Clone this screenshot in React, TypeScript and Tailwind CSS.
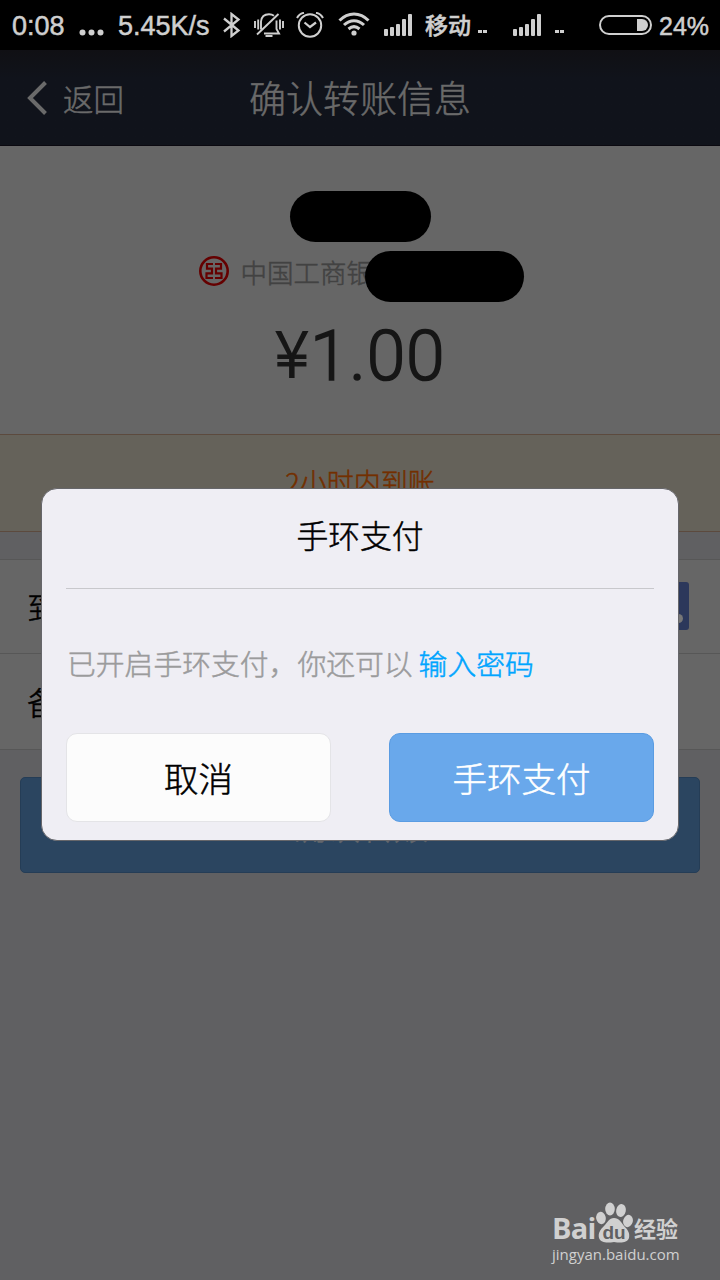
import type { ReactNode } from "react";

const SIGNAL_BARS = [
  { x: 0, y: 15, h: 7 },
  { x: 6, y: 13, h: 9 },
  { x: 12, y: 10, h: 12 },
  { x: 18, y: 5, h: 17 },
  { x: 24, y: 0, h: 22 },
];

function SignalIcon({ className }: { className: string }) {
  return (
    <svg className={className} width="28" height="22" viewBox="0 0 28 22" fill="currentColor">
      {SIGNAL_BARS.map((bar) => (
        <rect key={bar.x} x={bar.x} y={bar.y} width="4" height={bar.h} rx="1" />
      ))}
    </svg>
  );
}

function BluetoothIcon() {
  return (
    <svg className="ml-3 shrink-0" width="19" height="26" viewBox="0 0 19 26" fill="none" stroke="currentColor" strokeWidth="2.300">
      <path d="M2 6.500L16.500 18.500L9.500 24V2L16.500 7.500L2 19.500" />
    </svg>
  );
}

function MutedBellIcon() {
  return (
    <svg className="ml-[13px] shrink-0" width="30" height="26" viewBox="0 0 30 26" fill="none" stroke="currentColor" strokeWidth="1.900">
      <path d="M7 17.500V9.500C7.500 4.500 10.500 2.200 15 2.200c2 0 3.500.4 5 1.500" />
      <path d="M22.500 8.500v8.500l2.500 4.500H10" />
      <path d="M3 22.500L24.500 2" />
      <path d="M1 9v7M4.200 7.500v10M26 7.500v10M29 9v7" />
      <path d="M11.500 24h7" strokeWidth="2" />
    </svg>
  );
}

function AlarmIcon() {
  return (
    <svg className="ml-3 shrink-0" width="28" height="27" viewBox="0 0 28 27" fill="none" stroke="currentColor" strokeWidth="2">
      <circle cx="14" cy="13.500" r="11.200" />
      <path d="M8.500 10.500l5.500 4.500l6-4.500" strokeWidth="2.200" />
      <path d="M1 6C2.500 3.200 5 1.300 8 .8M27 6C25.500 3.200 23 1.300 20 .8" />
    </svg>
  );
}

function WifiIcon() {
  return (
    <svg className="ml-[14px] shrink-0" width="32" height="24" viewBox="0 0 32 24" fill="none" stroke="currentColor" strokeWidth="3">
      <path d="M1.500 8.500C10-.2 22-.2 30.500 8.500" />
      <path d="M6 13C12 7.200 20 7.200 26 13" />
      <path d="M10.500 17C14 14 18 14 21.500 17" />
      <circle cx="16" cy="21" r="2.600" fill="currentColor" stroke="none" />
    </svg>
  );
}

function BatteryIcon() {
  return (
    <svg className="ml-[35px] shrink-0" width="53" height="20" viewBox="0 0 53 20">
      <rect x="1" y="1" width="51" height="18" rx="9" fill="none" stroke="currentColor" strokeWidth="2" />
      <path d="M38 4h5a6 6 0 0 1 0 12h-5z" fill="currentColor" />
    </svg>
  );
}

function BankLogo() {
  return (
    <svg className="mt-[5px] shrink-0" width="30" height="30" viewBox="0 0 30 30" fill="none" stroke="#650000">
      <circle cx="15" cy="15" r="13.700" strokeWidth="2.600" />
      <path d="M14 8H8v4.700h5v4.600H7.500V22H14M16 8h6v4.700h-5v4.600h5.500V22H16" strokeWidth="2.200" />
    </svg>
  );
}

function Dots() {
  return (
    <svg className="ml-2 mt-[29px] shrink-0" width="9" height="4" viewBox="0 0 9 4" fill="currentColor">
      <rect y="1" width="4" height="3" />
      <rect x="5" y="1" width="4" height="3" />
    </svg>
  );
}

function StatusBar() {
  return (
    <div className="flex h-[50px] items-start bg-black pl-3 text-[#cfcfcf]">
      <span className="mt-[6px] w-[53px] text-[27px] leading-10">0:08</span>
      <svg className="ml-[14px] mt-[29px] shrink-0" width="25" height="7" viewBox="0 0 25 7" fill="currentColor">
        <circle cx="3.500" cy="3.500" r="3" />
        <circle cx="12.500" cy="3.500" r="3" />
        <circle cx="21.500" cy="3.500" r="3" />
      </svg>
      <span className="ml-[14px] mt-[6px] w-[92px] text-[27px] leading-10 whitespace-nowrap">5.45K/s</span>
      <div className="mt-3 flex">
        <BluetoothIcon />
        <MutedBellIcon />
        <AlarmIcon />
        <WifiIcon />
      </div>
      <SignalIcon className="ml-[14px] mt-[14px] shrink-0" />
      <span className="ml-[13px] mt-[6px] w-[45px] text-[23px] leading-10 font-medium whitespace-nowrap">移动</span>
      <Dots />
      <SignalIcon className="ml-[26px] mt-[14px] shrink-0" />
      <div className="ml-[6px] flex">
        <Dots />
      </div>
      <div className="mt-[15px]">
        <BatteryIcon />
      </div>
      <span className="ml-[7px] mt-[6px] text-[25px] leading-10">24%</span>
    </div>
  );
}

function TitleBar() {
  return (
    <header className="grid h-24 grid-cols-[1fr_auto_1fr] items-center border-b border-[#0b0910] bg-linear-to-b from-[#101014] to-[#10131b] to-30% text-[#6a6a6a]">
      <button className="flex items-center pl-[27px] text-[30.500px] leading-none">
        <svg className="mr-4" width="20" height="34" viewBox="0 0 20 34" fill="none" stroke="currentColor" strokeWidth="4">
          <path d="M18.500 1.500L3 17l15.500 15.500" />
        </svg>
        <span className="pt-[5px]">返回</span>
      </button>
      <h1 className="pt-[5px] text-[37px] leading-none">确认转账信息</h1>
    </header>
  );
}

function Row({ label, className, children }: { label: string; className: string; children?: ReactNode }) {
  return (
    <div className={`flex items-center justify-between border-b border-[#575757] pr-[31px] pl-[27px] text-[32px] text-black ${className}`}>
      <span className="pt-1">{label}</span>
      {children}
    </div>
  );
}

function Watermark() {
  return (
    <div className="absolute top-[1200px] left-[552px] w-[130px] font-normal text-[#d0d0d0] [-webkit-text-stroke:0px]">
      <div className="flex h-[43px] items-end">
        <span className="w-[43px] pb-px font-['Open_Sans',sans-serif] text-[29px] leading-7 font-bold tracking-[-0.8px]">Bai</span>
        <svg className="shrink-0" width="38" height="43" viewBox="0 0 38 43" fill="currentColor">
          <ellipse cx="6" cy="18" rx="4.800" ry="6.200" transform="rotate(-12 6 18)" />
          <ellipse cx="15" cy="9" rx="4.800" ry="6.500" />
          <ellipse cx="26" cy="10.500" rx="4.800" ry="6.500" transform="rotate(12 26 10.500)" />
          <ellipse cx="33" cy="21" rx="4.800" ry="6.200" transform="rotate(15 33 21)" />
          <path d="M19 18c5 0 7 4 10 8c4 4 6 7 5 12c-2 5-8 5-15 4c-7 1-13 1-15-4c-1-5 1-8 5-12c4-4 5-8 10-8z" />
          <text x="19" y="39" textAnchor="middle" fontSize="19" fontWeight="bold" fill="#606062">du</text>
        </svg>
        <span className="ml-px pb-px text-[22px] leading-6 font-bold whitespace-nowrap">经验</span>
      </div>
      <div className="pt-px font-['Open_Sans',sans-serif] text-[15px] leading-5 font-medium whitespace-nowrap">jingyan.baidu.com</div>
    </div>
  );
}

function PayDialog() {
  return (
    <div
      role="dialog"
      className="absolute top-[488px] left-[41px] flex h-[353px] w-[638px] flex-col rounded-[16px] border border-[#66666a] bg-[#efeef4] px-6"
    >
      <h2 className="h-[99px] pt-[24px] text-center text-[31.800px] leading-[48px] text-black">手环支付</h2>
      <div className="h-px bg-[#c8c8cc]" />
      <p className="mt-[55px] flex pl-px text-[28.800px] leading-[42px] whitespace-nowrap text-[#9b9b9c]">
        已开启手环支付，你还可以
        <a className="ml-[6px] text-[#00a5ff]">输入密码</a>
      </p>
      <div className="mt-[47px] flex justify-between">
        <button className="h-[89px] w-[265px] rounded-[11px] border border-[#e4e4e7] bg-[#fcfcfc] pt-[6px] text-[34.500px] text-black">取消</button>
        <button className="h-[89px] w-[265px] rounded-[11px] border border-[#5a9ce2] bg-[#69a8eb] pt-[6px] text-[34.500px] text-white">手环支付</button>
      </div>
    </div>
  );
}

export default function App() {
  return (
    <div className="relative h-[1280px] w-[720px] overflow-hidden bg-[#606062] font-['Liberation_Sans','Noto_Sans_CJK_SC',sans-serif] font-light [-webkit-text-stroke:0.5px]">
      <StatusBar />
      <TitleBar />

      <section className="flex h-[288px] flex-col items-center bg-[#666] pt-[45px]">
        <div className="h-[51px] w-[141px] rounded-full bg-black" />
        <div className="mt-[9px] flex h-[51px] w-[325px] pl-px">
          <BankLogo />
          <span className="mt-[3px] ml-3 w-[124px] text-[26.500px] leading-10 whitespace-nowrap text-[#424242]">中国工商银</span>
          <div className="relative h-[51px] w-[159px] shrink-0 rounded-full bg-black" />
        </div>
        <div className="mt-[15px] flex text-[69.500px] leading-[80px] text-[#161616]">
          <span className="-mt-[8px] mr-px font-['Noto_Sans_CJK_SC',sans-serif] text-[64px] [-webkit-text-stroke:1.8px]">¥</span>
          <span className="font-['Roboto',sans-serif] tracking-[0.7px] [-webkit-text-stroke:1.6px]">1.00</span>
        </div>
      </section>

      <div className="h-[98px] border-y border-[#5c4a3e] bg-[#65625a] pt-[27px] text-center text-[27px] leading-10 text-[#732f00]">
        <span className="font-['Noto_Sans_CJK_SC',sans-serif]">2</span>小时内到账
      </div>

      <section className="mt-[27px] border-t border-[#575757] bg-[#666]">
        <Row label="到账时间" className="h-[94px]">
          <div className="mb-[2px] flex h-12 w-12 items-end justify-end rounded-[3px] bg-[#2c385b] pr-[6px] pb-[7px]">
            <div className="size-[9px] rounded-full bg-[#777]" />
          </div>
        </Row>
        <Row label="备注" className="h-24" />
      </section>

      <button className="mx-5 mt-[27px] block h-24 w-[680px] rounded-[5px] border border-[#253d56] bg-[#2b4560] pt-[7px] text-[34px] text-[#62666c]">
        确认转账
      </button>

      <PayDialog />
      <Watermark />
    </div>
  );
}
